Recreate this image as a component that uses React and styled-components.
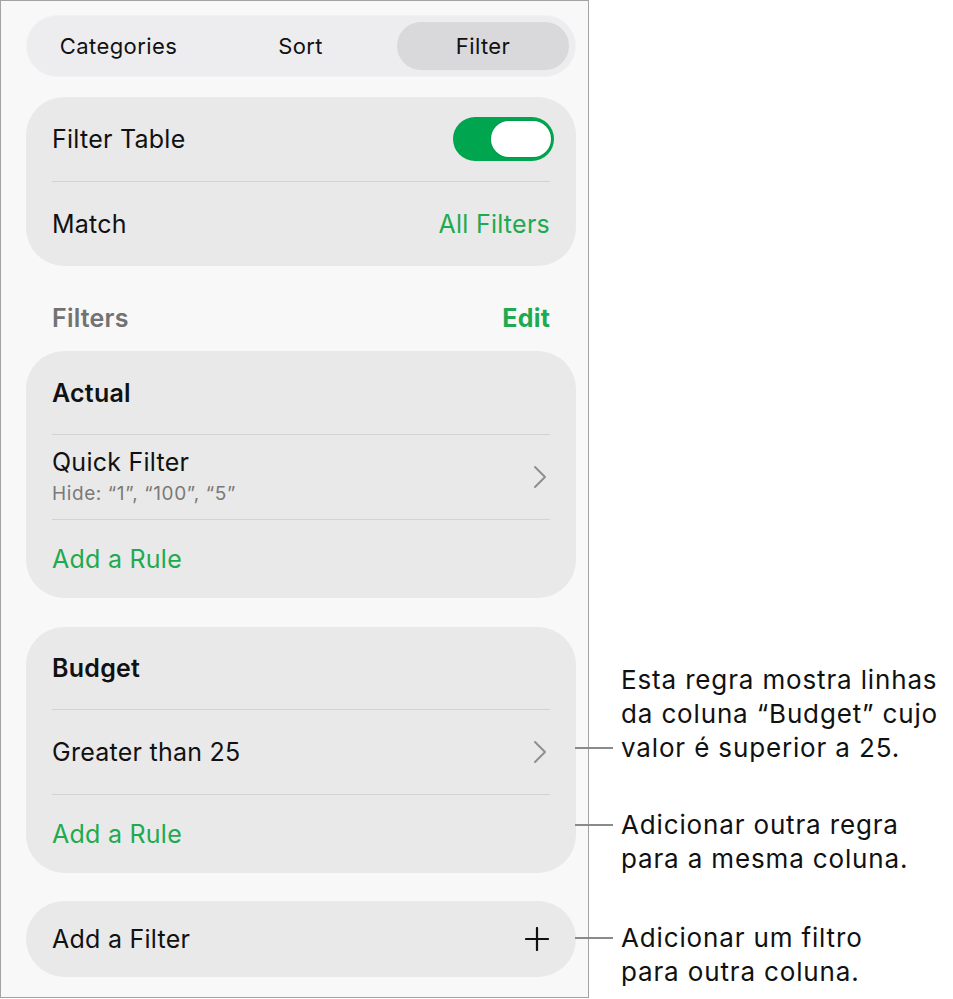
import React from 'react'
import styled, { createGlobalStyle } from 'styled-components'

const GREEN = '#1faa4f'

const GlobalStyle = createGlobalStyle`
  html, body {
    margin: 0;
    padding: 0;
    background: #ffffff;
  }
  body {
    font-family: Inter, "Noto Sans", "Liberation Sans", sans-serif;
    color: #111;
    -webkit-font-smoothing: antialiased;
  }
`

const Page = styled.div`
  display: flex;
  align-items: flex-start;
  width: 953px;
  height: 999px;
  overflow: hidden;
`

const Panel = styled.div`
  box-sizing: border-box;
  width: 589px;
  height: 998px;
  flex-shrink: 0;
  border: 1px solid #a3a3a3;
  background: #f8f8f9;
  padding: 14px 12px 0 25px;
  display: flex;
  flex-direction: column;
`

const Segmented = styled.div`
  box-sizing: border-box;
  height: 62px;
  border-radius: 31px;
  background: #ededef;
  border: 1px solid #f2f2f4;
  padding: 6px;
  display: grid;
  grid-template-columns: 171px 1fr 172px;
  align-items: stretch;
`

const Segment = styled.div`
  display: flex;
  align-items: center;
  justify-content: center;
  border-radius: 25px;
  font-size: 22px;
  font-weight: 400;
  letter-spacing: 0.4px;
  color: #111;
  background: ${p => (p.$active ? '#d9d9dc' : 'transparent')};
`

const Card = styled.div`
  background: #e9e9e9;
  border-radius: 38px;
  padding: 0 26px;
  margin-top: ${p => p.$gap || 0}px;
  display: flex;
  flex-direction: column;
`

const Row = styled.div`
  display: flex;
  align-items: center;
  justify-content: space-between;
  height: ${p => p.$h || 84}px;
  border-top: ${p => (p.$first ? 'none' : '1px solid #d3d3d3')};
  font-size: 25px;
  letter-spacing: 0.25px;
  color: #111;
`

const Label = styled.span`
  font-weight: ${p => (p.$bold ? 600 : 400)};
  color: ${p => (p.$green ? GREEN : '#111')};
`

const Stack = styled.div`
  display: flex;
  flex-direction: column;
  line-height: 30px;
  margin-top: -1px;
`

const Sub = styled.span`
  font-size: 19px;
  line-height: 26px;
  margin-top: 4px;
  letter-spacing: 0.6px;
  color: #7a7a7a;
`

const SectionHead = styled.div`
  display: flex;
  align-items: center;
  justify-content: space-between;
  height: 44px;
  padding: 30px 26px 11px;
  font-size: 25px;
  letter-spacing: 0.2px;
`

const HeadTitle = styled.span`
  color: #727272;
  font-weight: 600;
`

const HeadAction = styled.span`
  color: ${GREEN};
  font-weight: 700;
`

const Toggle = styled.div`
  box-sizing: border-box;
  width: 101px;
  height: 44px;
  margin-right: -4px;
  border-radius: 22px;
  background: #00a64f;
  padding: 4px 3px 4px 38px;
  display: flex;
`

const Knob = styled.div`
  flex: 1;
  border-radius: 18px;
  background: #fff;
  box-shadow: 0 0 0 1px rgba(0, 0, 0, 0.06);
`

const Notes = styled.div`
  display: flex;
  flex-direction: column;
  margin-left: -14px;
  padding-top: 663px;
`

const Note = styled.div`
  display: flex;
  align-items: flex-start;
  margin-top: ${p => p.$gap || 0}px;
`

const Leader = styled.div`
  width: 38px;
  height: 2px;
  background: #8a8a8a;
  flex-shrink: 0;
  margin-top: ${p => (p.$line - 1) * 34 + 16}px;
  margin-right: 8px;
`

const NoteText = styled.div`
  font-size: 26px;
  line-height: 34px;
  letter-spacing: 0.85px;
  white-space: nowrap;
  color: #111;
`

const Chevron = () => (
  <svg width="16" height="24" viewBox="0 0 16 24" style={{ marginRight: 2 }}>
    <path d="M3 2 L13 12 L3 22" fill="none" stroke="#8f8f8f" strokeWidth="2" strokeLinecap="round" strokeLinejoin="round" />
  </svg>
)

const Plus = () => (
  <svg width="24" height="24" viewBox="0 0 24 24" style={{ marginRight: 1 }}>
    <path d="M12 1 V23 M1 12 H23" fill="none" stroke="#111" strokeWidth="2.2" strokeLinecap="round" />
  </svg>
)

const App = () => {
  return (
    <>
      <GlobalStyle />
      <Page>
        <Panel>
          <Segmented>
            <Segment>Categories</Segment>
            <Segment>Sort</Segment>
            <Segment $active>Filter</Segment>
          </Segmented>

          <Card $gap={20}>
            <Row $first>
              <Label>Filter Table</Label>
              <Toggle>
                <Knob />
              </Toggle>
            </Row>
            <Row>
              <Label>Match</Label>
              <Label $green>All Filters</Label>
            </Row>
          </Card>

          <SectionHead>
            <HeadTitle>Filters</HeadTitle>
            <HeadAction>Edit</HeadAction>
          </SectionHead>

          <Card>
            <Row $first $h={83}>
              <Label $bold>Actual</Label>
            </Row>
            <Row>
              <Stack>
                <Label>Quick Filter</Label>
                <Sub>Hide: “1”, “100”, “5”</Sub>
              </Stack>
              <Chevron />
            </Row>
            <Row $h={78}>
              <Label $green>Add a Rule</Label>
            </Row>
          </Card>

          <Card $gap={29}>
            <Row $first $h={82}>
              <Label $bold>Budget</Label>
            </Row>
            <Row>
              <Label>Greater than 25</Label>
              <Chevron />
            </Row>
            <Row $h={78}>
              <Label $green>Add a Rule</Label>
            </Row>
          </Card>

          <Card $gap={28}>
            <Row $first $h={76}>
              <Label>Add a Filter</Label>
              <Plus />
            </Row>
          </Card>
        </Panel>

        <Notes>
          <Note>
            <Leader $line={3} />
            <NoteText>
              Esta regra mostra linhas
              <br />
              da coluna “Budget” cujo
              <br />
              valor é superior a 25.
            </NoteText>
          </Note>
          <Note $gap={43}>
            <Leader $line={1} />
            <NoteText>
              Adicionar outra regra
              <br />
              para a mesma coluna.
            </NoteText>
          </Note>
          <Note $gap={45}>
            <Leader $line={1} />
            <NoteText>
              Adicionar um filtro
              <br />
              para outra coluna.
            </NoteText>
          </Note>
        </Notes>
      </Page>
    </>
  )
}

export default App
